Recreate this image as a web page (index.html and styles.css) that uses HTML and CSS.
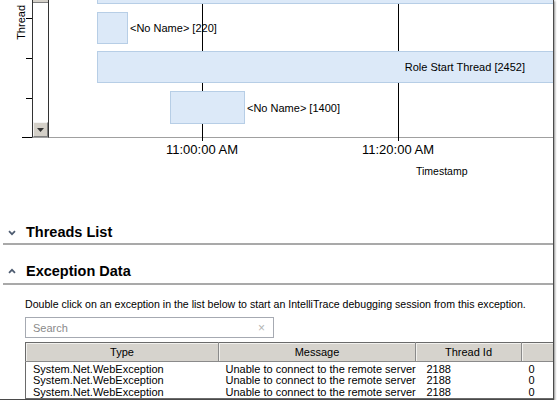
FILE: index.html
```html
<!DOCTYPE html>
<html>
<head>
<meta charset="utf-8">
<link rel="stylesheet" href="styles.css">
</head>
<body>
<div class="frame">
  <div class="chart">
    <div class="plot-row">
      <div class="yaxis">
        <span class="ylabel">Thread</span>
        <span class="tick" style="top:18px"></span>
        <span class="tick" style="top:58px"></span>
        <span class="tick" style="top:98px"></span>
        <span class="tick tick-base"></span>
      </div>
      <div class="scrollbar">
        <div class="sb-thumb"></div>
        <div class="sb-down"><svg width="7" height="4" viewBox="0 0 7 4"><path d="M0 0H7L3.5 4Z" fill="#333"/></svg></div>
      </div>
      <div class="plot">
        <span class="gridline" style="left:153px"></span>
        <span class="gridline" style="left:349px"></span>
        <div class="lane lane-first">
          <div class="bar bar-cut bar-full" style="margin-left:48px"></div>
        </div>
        <div class="lane lane-2">
          <div class="bar" style="margin-left:48px;width:31px"></div>
          <span class="bar-label">&lt;No Name&gt; [220]</span>
        </div>
        <div class="lane lane-3">
          <div class="bar bar-full bar-text" style="margin-left:48px">Role Start Thread [2452]</div>
        </div>
        <div class="lane lane-4">
          <div class="bar" style="margin-left:121px;width:75px"></div>
          <span class="bar-label">&lt;No Name&gt; [1400]</span>
        </div>
      </div>
    </div>
    <div class="xaxis">
      <span class="xlabel" style="left:202px">11:00:00 AM</span>
      <span class="xlabel" style="left:398px">11:20:00 AM</span>
      <span class="xtitle">Timestamp</span>
    </div>
  </div>

  <section class="panel">
    <header class="panel-head">
      <svg class="chev" width="8" height="6" viewBox="0 0 8 6"><path d="M1 1.2L4 4.2L7 1.2" fill="none" stroke="#4d5b70" stroke-width="1.7"/></svg>
      <h2>Threads List</h2>
    </header>
  </section>

  <section class="panel panel-open">
    <header class="panel-head">
      <svg class="chev" width="8" height="6" viewBox="0 0 8 6"><path d="M1 4.8L4 1.8L7 4.8" fill="none" stroke="#4d5b70" stroke-width="1.7"/></svg>
      <h2>Exception Data</h2>
    </header>
    <p class="hint">Double click on an exception in the list below to start an IntelliTrace debugging session from this exception.</p>
    <div class="search">
      <span class="search-ph">Search</span>
      <span class="search-x">×</span>
    </div>
    <table class="exc">
      <thead>
        <tr><th class="c-type">Type</th><th class="c-msg">Message</th><th class="c-id">Thread Id</th><th class="c-x"></th></tr>
      </thead>
      <tbody>
        <tr><td>System.Net.WebException</td><td>Unable to connect to the remote server</td><td class="id">2188</td><td>0</td></tr>
        <tr><td>System.Net.WebException</td><td>Unable to connect to the remote server</td><td class="id">2188</td><td>0</td></tr>
        <tr><td>System.Net.WebException</td><td>Unable to connect to the remote server</td><td class="id">2188</td><td>0</td></tr>
      </tbody>
    </table>
  </section>
</div>
</body>
</html>
```

FILE: styles.css
```css
html, body {
  margin: 0;
  padding: 0;
  background: #ffffff;
}

body {
  font-family: "Liberation Sans", Arial, sans-serif;
  color: #000;
}

.frame {
  width: 554px;
  height: 400px;
  box-sizing: border-box;
  border-right: 1px solid #4a4a4a;
  border-bottom: 1px solid #4a4a4a;
  box-shadow: 1px 1px 2px rgba(0, 0, 0, 0.45);
  overflow: hidden;
  background: #fff;
}

/* ---------- chart ---------- */
.chart {
  height: 222px;
}

.plot-row {
  display: flex;
  height: 138px;
}

.yaxis {
  width: 32px;
  position: relative;
  flex: none;
}

.ylabel {
  position: absolute;
  left: 15px;
  top: 5px;
  font-size: 11px;
  line-height: 12px;
  writing-mode: vertical-rl;
  transform: rotate(180deg);
}

.tick {
  position: absolute;
  right: 0;
  width: 6px;
  height: 1px;
  background: #000;
}

.tick-base {
  top: 137px;
  width: 10px;
}

.scrollbar {
  width: 15px;
  flex: none;
  border-left: 1px solid #333;
  border-right: 1px solid #333;
  border-bottom: 1px solid #a0a0a0;
  display: flex;
  flex-direction: column;
  justify-content: space-between;
  background: #fff;
}

.sb-thumb {
  height: 2px;
  background: #d4d0c8;
  border-bottom: 1px solid #808080;
}

.sb-down {
  height: 13px;
  background: #d4d0c8;
  border: 1px solid;
  border-color: #f4f4f4 #808080 #808080 #f4f4f4;
  display: flex;
  align-items: center;
  justify-content: center;
}

.plot {
  flex: 1;
  position: relative;
  border-bottom: 1px solid #a0a0a0;
  display: flex;
  flex-direction: column;
}

.gridline {
  position: absolute;
  top: 0;
  width: 1px;
  height: 141px;
  background: #000;
  z-index: 0;
}

.lane {
  position: relative;
  z-index: 1;
  display: flex;
  align-items: center;
  font-size: 11px;
}

.bar {
  box-sizing: border-box;
  background: #dce9f8;
  border: 1px solid #b7cee6;
  flex: none;
}

.bar-full {
  flex: 1;
  border-right: none;
}

.bar-cut {
  border-top: none;
}

.lane-first .bar {
  height: 4px;
}

.lane-2 {
  margin-top: 8px;
}

.lane-2 .bar {
  height: 32px;
}

.lane-3 {
  margin-top: 7px;
}

.lane-3 .bar {
  height: 32px;
}

.bar-text {
  display: flex;
  align-items: center;
  justify-content: flex-end;
  padding-right: 28px;
}

.lane-4 {
  margin-top: 8px;
}

.lane-4 .bar {
  height: 33px;
}

.bar-label {
  margin-left: 2px;
  white-space: nowrap;
}

.xaxis {
  position: relative;
  height: 84px;
}

.xlabel {
  position: absolute;
  top: 4px;
  transform: translateX(-50%);
  font-size: 13px;
  line-height: 15px;
  white-space: nowrap;
}

.xtitle {
  position: absolute;
  left: 416px;
  top: 27px;
  font-size: 10.5px;
  line-height: 12px;
}

/* ---------- panels ---------- */
.panel-head {
  display: flex;
  align-items: center;
  height: 21px;
  margin-left: 3px;
  padding-left: 5px;
  border-bottom: 2px solid #a9a9a9;
}

.panel-open {
  margin-top: 17px;
}

.panel-open .panel-head {
  align-items: flex-start;
}

.panel-open .chev {
  margin-top: 6px;
}

.panel-open h2 {
  margin-top: 1px;
}

.chev {
  flex: none;
}

.panel-head h2 {
  margin: 0 0 0 10px;
  font-size: 14.5px;
  font-weight: bold;
  line-height: 17px;
}

.panel-open .panel-head h2 {
  margin-top: 1px;
}

.hint {
  margin: 13px 0 0 25px;
  font-size: 10.6px;
  line-height: 13px;
  white-space: nowrap;
}

.search {
  margin: 6px 0 0 25px;
  width: 249px;
  height: 21px;
  box-sizing: border-box;
  border: 1px solid #a6aab2;
  display: flex;
  align-items: center;
  justify-content: space-between;
  padding: 0 8px 0 7px;
  font-size: 11px;
}

.search-ph {
  color: #8a8a8a;
}

.search-x {
  color: #b4b4b4;
  font-size: 12px;
}

.exc {
  margin: 4px 0 0 25px;
  border-collapse: collapse;
  table-layout: fixed;
  width: 560px;
  border: 1px solid #6a6a6a;
  font-size: 11px;
}

.exc th {
  background: #d6d3cd;
  font-weight: normal;
  height: 18px;
  padding: 0;
  text-align: center;
  border-right: 1px solid #8a8a8a;
  border-bottom: 1px solid #8a8a8a;
  box-shadow: inset 1px 1px 0 #f2f1ee;
  line-height: 13px;
}

.c-type { width: 192px; }
.c-msg { width: 196px; }
.c-id { width: 105px; }

.exc td {
  padding: 0 0 0 7px;
  line-height: 11.3px;
  white-space: nowrap;
  overflow: hidden;
}

.exc tbody tr:first-child td {
  padding-top: 2px;
}

.exc td.id {
  padding-left: 11px;
}
```
